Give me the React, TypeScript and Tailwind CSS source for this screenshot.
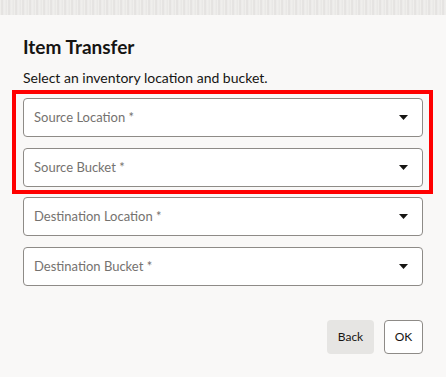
import React from 'react'

const fields = [
  'Source Location *',
  'Source Bucket *',
  'Destination Location *',
  'Destination Bucket *',
]

function Caret() {
  return (
    <svg width="9" height="5" viewBox="0 0 9 5" className="shrink-0">
      <path d="M0 0 H9 L4.5 5 Z" fill="#161513" />
    </svg>
  )
}

function SelectField({ label }: { label: string }) {
  return (
    <div className="flex h-[39px] w-full items-center justify-between rounded-[4px] border border-[#8e8b87] bg-white pl-[10px] pr-[14px]">
      <span className="text-[13px] text-[#75726f]">{label}</span>
      <Caret />
    </div>
  )
}

export default function App() {
  return (
    <div
      className="h-[377px] w-[446px] overflow-hidden bg-[#f9f8f7]"
      style={{ fontFamily: 'Lato, "Noto Sans", sans-serif' }}
    >
      <div className="h-[15px] w-full bg-[#e9e8e6] bg-[repeating-linear-gradient(90deg,#f3f2f0_0px,#dcdad7_2px,#efeeec_4px,#e4e3e0_7px)] opacity-80" />
      <div className="flex flex-col px-[23px] pt-[19px]">
        <h1 className="text-[19px] font-bold leading-[26px] text-[#161513]">
          Item Transfer
        </h1>
        <p className="mt-[9px] text-[14px] leading-[18px] text-[#161513]">
          Select an inventory location and bucket.
        </p>
        <div className="-ml-[11px] -mr-[10px] mt-[3px] flex flex-col gap-[11px] border-4 border-[#ff0000] pb-[3px] pl-[7px] pr-[6px] pt-[4px]">
          <SelectField label={fields[0]} />
          <SelectField label={fields[1]} />
        </div>
        <div className="mt-[3px] flex flex-col gap-[11px]">
          <SelectField label={fields[2]} />
          <SelectField label={fields[3]} />
        </div>
        <div className="mt-[34px] flex justify-end gap-[10px]">
          <button className="h-[34px] w-[47px] rounded-[4px] bg-[#e6e5e3] text-[12px] text-[#161513]">
            Back
          </button>
          <button className="h-[34px] w-[39px] rounded-[4px] border border-[#8e8b87] bg-white text-[12px] text-[#161513]">
            OK
          </button>
        </div>
      </div>
    </div>
  )
}
